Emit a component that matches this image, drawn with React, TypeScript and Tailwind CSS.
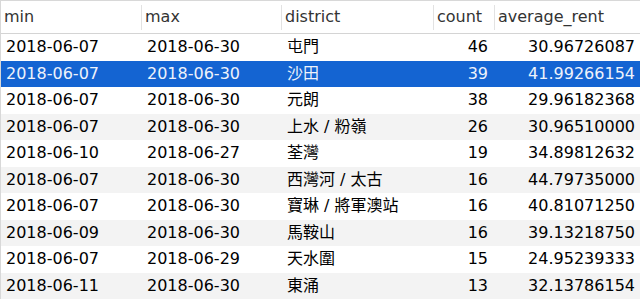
import React from 'react';

type Row = { min: string; max: string; district: string; count: number; rent: string };

const rows: Row[] = [
  { min: '2018-06-07', max: '2018-06-30', district: '屯門', count: 46, rent: '30.96726087' },
  { min: '2018-06-07', max: '2018-06-30', district: '沙田', count: 39, rent: '41.99266154' },
  { min: '2018-06-07', max: '2018-06-30', district: '元朗', count: 38, rent: '29.96182368' },
  { min: '2018-06-07', max: '2018-06-30', district: '上水 / 粉嶺', count: 26, rent: '30.96510000' },
  { min: '2018-06-10', max: '2018-06-27', district: '荃灣', count: 19, rent: '34.89812632' },
  { min: '2018-06-07', max: '2018-06-30', district: '西灣河 / 太古', count: 16, rent: '44.79735000' },
  { min: '2018-06-07', max: '2018-06-30', district: '寶琳 / 將軍澳站', count: 16, rent: '40.81071250' },
  { min: '2018-06-09', max: '2018-06-30', district: '馬鞍山', count: 16, rent: '39.13218750' },
  { min: '2018-06-07', max: '2018-06-29', district: '天水圍', count: 15, rent: '24.95239333' },
  { min: '2018-06-11', max: '2018-06-30', district: '東涌', count: 13, rent: '32.13786154' },
];

const cols = 'grid grid-cols-[140px_140px_152px_61px_147px]';

const App: React.FC = () => {
  return (
    <div
      className="w-[640px] h-[299px] overflow-hidden bg-white border-t border-l border-[#d8d8d8] text-[16px] text-black"
      style={{ fontFamily: '"DejaVu Sans", "Noto Sans CJK TC", sans-serif' }}
    >
      {/* header */}
      <div className={`${cols} h-[33px] items-center border-b border-[#d4d4d4] text-[#333]`}>
        <div className="pl-[3px]">min</div>
        <div className="h-[25px] flex items-center border-l border-[#e2e2e2] pl-[3px]">max</div>
        <div className="h-[25px] flex items-center border-l border-[#e2e2e2] pl-[3px]">district</div>
        <div className="h-[25px] flex items-center border-l border-[#e2e2e2] pl-[3px]">count</div>
        <div className="h-[25px] flex items-center border-l border-[#e2e2e2] pl-[3px]">average_rent</div>
      </div>
      {rows.map((r, i) => {
        const selected = i === 1;
        const bg = selected ? 'bg-[#1464d2] text-[#eef2fb]' : i % 2 === 1 ? 'bg-[#f3f3f3]' : 'bg-white';
        return (
          <div key={i} className={`${cols} h-[26.5px] items-center ${bg}`}>
            <div className="pl-[5px]">{r.min}</div>
            <div className="pl-[6px]">{r.max}</div>
            <div className="pl-[6px] whitespace-nowrap">{r.district}</div>
            <div className="text-right pr-[6px]">{r.count}</div>
            <div className="text-right pr-[6px]">{r.rent}</div>
          </div>
        );
      })}
    </div>
  );
};

export default App;
